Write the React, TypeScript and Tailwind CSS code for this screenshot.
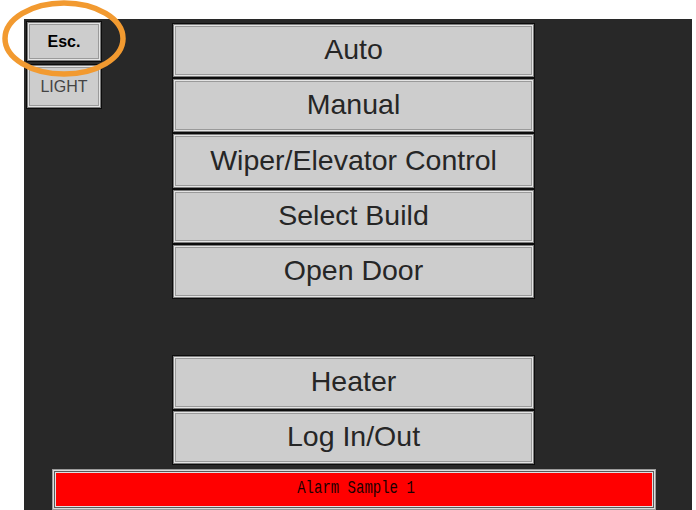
const BEVEL =
  'border border-[#0c0c0c] bg-[#cdcdcd] shadow-[inset_0_0_0_1px_#7c7c7c,inset_0_0_0_2px_#e4e4e4,inset_0_0_0_3px_#9a9a9a]';

const MENU_TOP = [
  { label: 'Auto', h: 'h-[55px]' },
  { label: 'Manual', h: 'h-[55px]' },
  { label: 'Wiper/Elevator Control', h: 'h-[56px]' },
  { label: 'Select Build', h: 'h-[55px]' },
  { label: 'Open Door', h: 'h-[55px]' },
];

const MENU_BOTTOM = [
  { label: 'Heater', h: 'h-[55px]' },
  { label: 'Log In/Out', h: 'h-[55px]' },
];

function MenuButton({ label, h }: { label: string; h: string }) {
  return (
    <button className={`${BEVEL} ${h} w-full flex items-center justify-center pb-[2px] text-[28.5px] text-[#262626] leading-none`}>
      {label}
    </button>
  );
}

export default function App() {
  return (
    <div className="relative w-[696px] h-[510px] bg-white overflow-hidden font-['Liberation_Sans',Arial,sans-serif]">
      {/* HMI panel */}
      <div className="ml-[24px] mt-[19px] w-[668px] h-[491px] bg-[#282828] flex flex-col">
        <div className="flex">
          {/* left small buttons */}
          <div className="ml-[2px] mt-[2px] w-[76px] flex flex-col gap-[2px]">
            <button className={`${BEVEL} h-[41px] flex items-center justify-center text-[16px] font-bold text-black`}>
              Esc.
            </button>
            <button className={`${BEVEL} h-[45px] flex items-center justify-center text-[16px] text-[#444]`}>
              LIGHT
            </button>
          </div>

          {/* main menu */}
          <div className="ml-[70px] mt-[4px] w-[363px] flex flex-col">
            {MENU_TOP.map(b => <MenuButton key={b.label} {...b} />)}
            <div className="h-[56px]" />
            {MENU_BOTTOM.map(b => <MenuButton key={b.label} {...b} />)}
          </div>
        </div>

        {/* alarm banner */}
        <div className="ml-[28px] mt-[4px] w-[604px] h-[46px] border border-[#9a9a9a] p-[3px] shadow-[inset_0_0_0_1px_#dcdcdc,inset_0_0_0_2px_#5a5a5a,inset_0_0_0_3px_#e0e0e0]">
          <div className="h-full bg-[#ff0000] flex items-center justify-center font-['Liberation_Mono',monospace] text-[14px] text-[#1a0000]">
            <span className="inline-block scale-y-[1.3] -mt-[3px] ml-[4px]">Alarm Sample 1</span>
          </div>
        </div>
      </div>

      {/* highlight circle */}
      <svg className="absolute left-0 top-0" width="130" height="80" viewBox="0 0 130 80">
        <ellipse cx="64" cy="38.5" rx="59" ry="35.5" fill="none" stroke="#f29a30" strokeWidth="5.5" />
      </svg>
    </div>
  );
}
